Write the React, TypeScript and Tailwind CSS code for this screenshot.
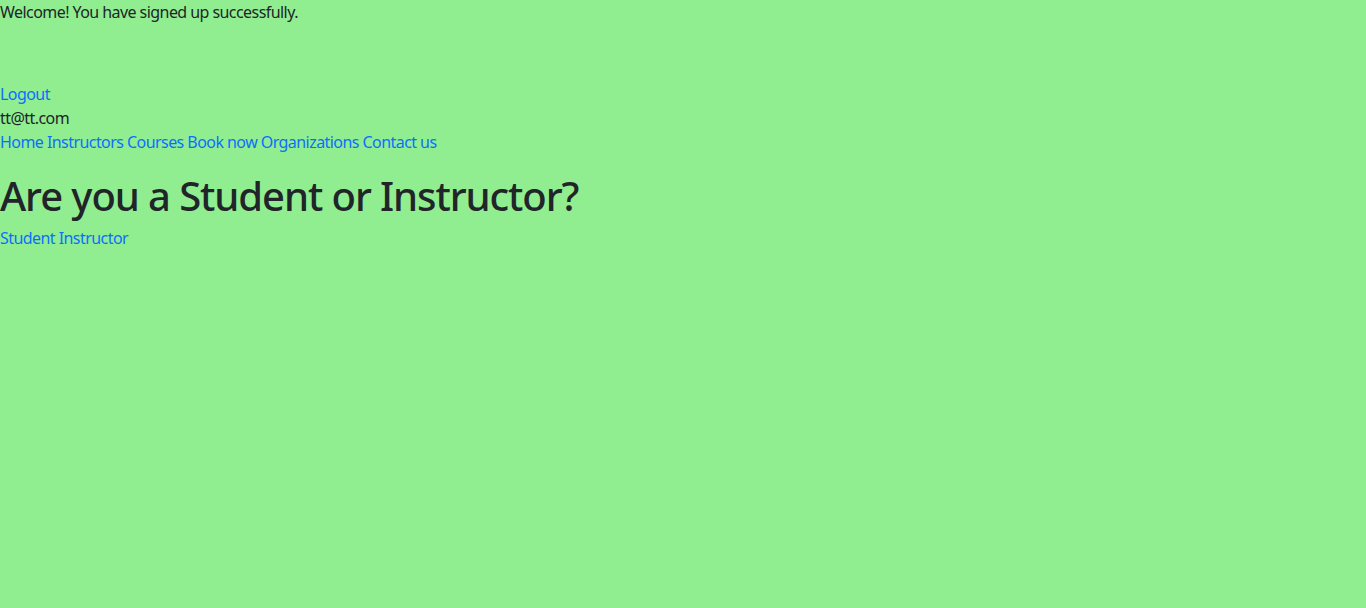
export default function App() {
  const nav = ['Home', 'Instructors', 'Courses', 'Book now', 'Organizations', 'Contact us']

  return (
    <div className="min-h-[608px] bg-[#90ee90] text-[#212529] font-['Segoe_UI','Noto_Sans',sans-serif] text-base leading-6 tracking-[-0.035em]">
      <p className="mb-4">Welcome! You have signed up successfully.</p>

      <div className="pt-[42px]">
        <a href="#" className="block text-[#0d6efd]">
          Logout
        </a>
        <div>tt@tt.com</div>
        <nav className="text-[#0d6efd]">
          {nav.map((n, i) => (
            <span key={n}>
              <a href="#">{n}</a>
              {i < nav.length - 1 ? ' ' : ''}
            </span>
          ))}
        </nav>
      </div>

      <h1 className="mt-[18px] mb-[6px] text-[40px] leading-[48px] font-medium tracking-[-0.027em]">
        Are you a Student or Instructor?
      </h1>
      <div className="text-[#0d6efd]">
        <a href="#">Student</a> <a href="#">Instructor</a>
      </div>
    </div>
  )
}
